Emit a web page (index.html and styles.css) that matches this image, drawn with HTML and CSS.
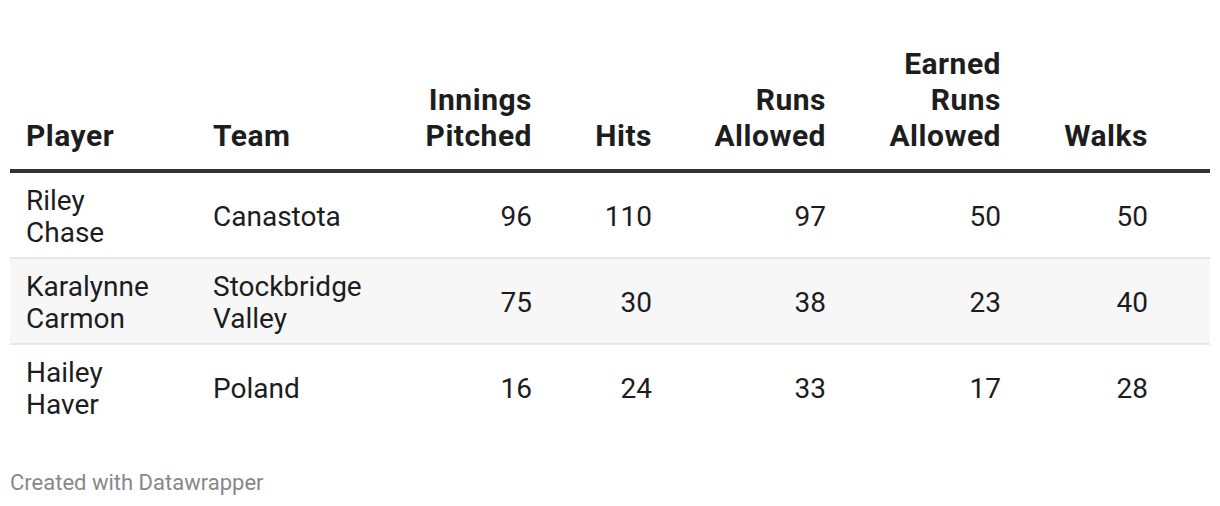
FILE: index.html
```html
<!DOCTYPE html>
<html>
<head>
<meta charset="utf-8">
<link rel="stylesheet" href="styles.css">
</head>
<body>
<div class="chart">
  <table class="dw-table">
    <colgroup>
      <col class="c-player">
      <col class="c-team">
      <col class="c-ip">
      <col class="c-hits">
      <col class="c-runs">
      <col class="c-earned">
      <col class="c-walks">
    </colgroup>
    <thead>
      <tr>
        <th class="txt pl">Player</th>
        <th class="txt tm">Team</th>
        <th class="num">Innings Pitched</th>
        <th class="num">Hits</th>
        <th class="num">Runs Allowed</th>
        <th class="num">Earned Runs Allowed</th>
        <th class="num last">Walks</th>
      </tr>
    </thead>
    <tbody>
      <tr>
        <td class="txt pl">Riley Chase</td>
        <td class="txt tm">Canastota</td>
        <td class="num">96</td>
        <td class="num">110</td>
        <td class="num">97</td>
        <td class="num">50</td>
        <td class="num last">50</td>
      </tr>
      <tr class="alt">
        <td class="txt pl">Karalynne Carmon</td>
        <td class="txt tm">Stockbridge Valley</td>
        <td class="num">75</td>
        <td class="num">30</td>
        <td class="num">38</td>
        <td class="num">23</td>
        <td class="num last">40</td>
      </tr>
      <tr>
        <td class="txt pl">Hailey Haver</td>
        <td class="txt tm">Poland</td>
        <td class="num">16</td>
        <td class="num">24</td>
        <td class="num">33</td>
        <td class="num">17</td>
        <td class="num last">28</td>
      </tr>
    </tbody>
  </table>
  <div class="footer">Created with Datawrapper</div>
</div>
</body>
</html>
```
FILE: styles.css
```css
html, body {
  margin: 0;
  padding: 0;
  background: #ffffff;
}
body {
  font-family: Roboto, "Liberation Sans", sans-serif;
  color: #1d1d1d;
}
.chart {
  padding: 36px 10px 0 10px;
}
.dw-table {
  width: 1200px;
  border-collapse: collapse;
  table-layout: fixed;
  font-size: 28px;
}
.c-player { width: 187px; }
.c-team { width: 183px; }
.c-ip { width: 168px; }
.c-hits { width: 120px; }
.c-runs { width: 174px; }
.c-earned { width: 175px; }
.c-walks { width: 193px; }

.dw-table th {
  font-size: 30px;
  font-weight: 700;
  letter-spacing: 0.5px;
  line-height: 36px;
  vertical-align: bottom;
  padding: 10px 16px 15px 16px;
  border-bottom: 4px solid #333333;
  color: #1d1d1d;
}
.dw-table td {
  font-weight: 400;
  line-height: 32px;
  vertical-align: middle;
  padding: 12px 16px 8px 16px;
  border-bottom: 2px solid #e8e8e8;
}
.dw-table tbody tr:last-child td {
  border-bottom: none;
}
.dw-table tr.alt td {
  background: #f7f7f7;
}
.txt { text-align: left; }
.num { text-align: right; }
.pl { padding-right: 46px !important; }
.tm { padding-right: 12px !important; }
.last { padding-right: 62px !important; }

.footer {
  margin-top: 41px;
  font-size: 22px;
  line-height: 26px;
  color: #888888;
}
```
